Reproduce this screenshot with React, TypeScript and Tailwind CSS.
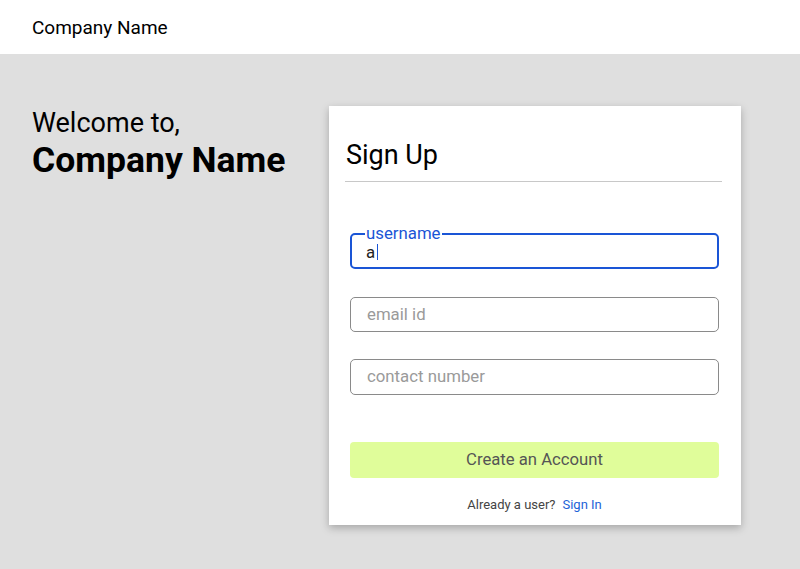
import React from 'react';

const App: React.FC = () => {
    return (
        <div className="w-[800px] h-[569px] flex flex-col bg-[#dfdfdf] font-['Roboto',sans-serif] text-black">
            {/* Top bar */}
            <header className="h-[54px] bg-white flex items-center px-8 shrink-0">
                <span className="text-[19px] leading-none">Company Name</span>
            </header>

            <main className="flex flex-1 pt-[52px] pl-8">
                {/* Welcome text */}
                <div className="w-[297px] pt-[1px]">
                    <div className="text-[27px] leading-[32px]">Welcome to,</div>
                    <div className="text-[35.5px] leading-[42px] font-bold">Company Name</div>
                </div>

                {/* Sign up card */}
                <div className="w-[412px] h-[419px] bg-white shadow-[0_3px_8px_rgba(0,0,0,0.25)] flex flex-col pt-[34px] pl-4 pr-[19px]">
                    <h1 className="pl-[1px] text-[27px] leading-[30px] pb-[11px] border-b border-[#c8c8c8]">Sign Up</h1>

                    <div className="flex flex-col px-[5px] pr-[3px] mt-[51px]">
                        <fieldset className="border-2 border-[#1a55d6] rounded-[5px] px-[14px] h-[42px] -mt-[6px]">
                            <legend className="px-[1px] -ml-[1px] text-[16.8px] leading-[13px] text-[#1a55d6]">username</legend>
                            <div className="pt-[3px] text-[16.8px] leading-[18px] text-[#222] flex items-center">
                                a<span className="inline-block w-[1px] h-[16px] bg-[#1a55d6] ml-[2px]" />
                            </div>
                        </fieldset>

                        <div className="mt-[28px] h-[35px] border border-[#8a8a8a] rounded-[5px] flex items-center px-4 text-[16.8px] text-[#9a9a9a]">
                            email id
                        </div>

                        <div className="mt-[27px] h-[36px] border border-[#8a8a8a] rounded-[5px] flex items-center px-4 text-[16.8px] text-[#9a9a9a]">
                            contact number
                        </div>

                        <button className="mt-[47px] h-[36px] rounded-[4px] bg-[#e0fd9a] text-[16.7px] text-[#555]">
                            Create an Account
                        </button>

                        <div className="mt-[17px] text-center text-[13px] text-[#444]">
                            Already a user?<span className="ml-[7px] text-[#1d63d8]">Sign In</span>
                        </div>
                    </div>
                </div>
            </main>
        </div>
    );
};

export default App;
